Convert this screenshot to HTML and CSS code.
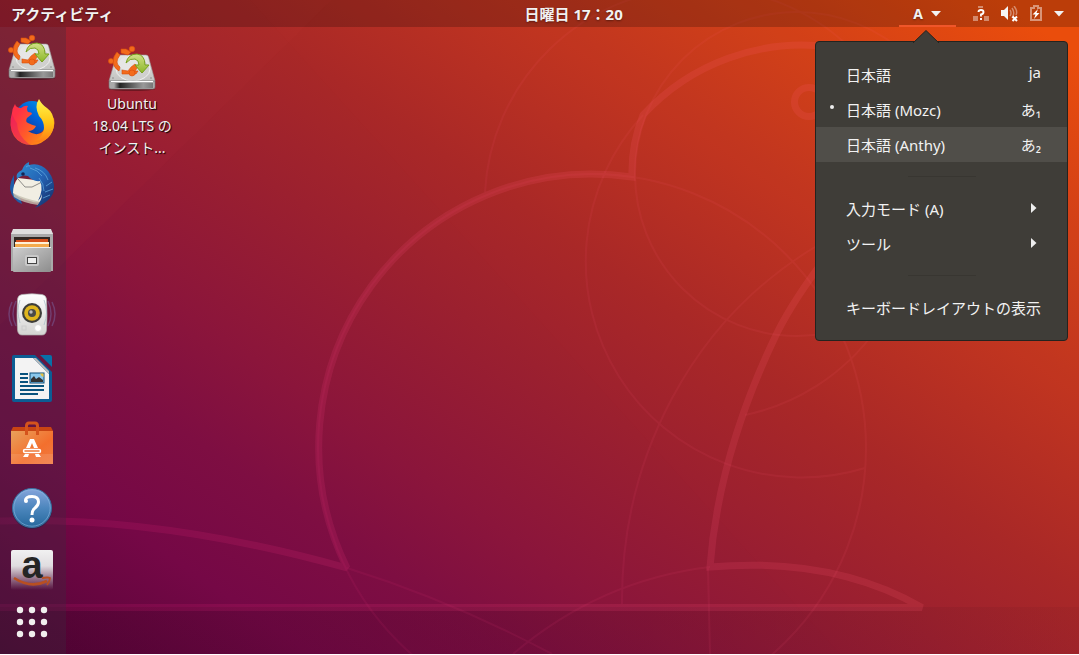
FILE: index.html
```html
<!DOCTYPE html>
<html lang="ja">
<head>
<meta charset="utf-8">
<title>Ubuntu デスクトップ</title>
<link rel="stylesheet" href="styles.css">
</head>
<body>
<svg width="0" height="0" class="defs" aria-hidden="true">
  <defs>
    <linearGradient id="disk" x1="0" y1="0" x2="0" y2="1"><stop offset="0" stop-color="#e6e6e4"/><stop offset="1" stop-color="#c2c2c0"/></linearGradient>
    <linearGradient id="diskFront" x1="0" y1="0" x2="1" y2="0"><stop offset="0" stop-color="#aaa"/><stop offset=".15" stop-color="#222"/><stop offset=".75" stop-color="#999"/><stop offset="1" stop-color="#777"/></linearGradient>
    <linearGradient id="green" x1="0" y1="0" x2="0" y2="1"><stop offset="0" stop-color="#d3e08a"/><stop offset="1" stop-color="#8cb829"/></linearGradient>
    <symbol id="installer" viewBox="0 0 48 48">
      <ellipse cx="24" cy="44" rx="23" ry="2" fill="#000" opacity=".3"/>
      <path d="M8 12Q8.500 10 11 10H38Q40 10 40.500 12L47 36H1Z" fill="url(#disk)" stroke="#999" stroke-width=".6"/>
      <ellipse cx="25" cy="24" rx="17" ry="12" fill="#d0d0ce" stroke="#f0f0f0"/>
      <ellipse cx="22" cy="19" rx="11" ry="8" fill="#e6e6e6"/>
      <path d="M1 36H47V42Q47 44 45 44H3Q1 44 1 42Z" fill="#aaa" stroke="#777" stroke-width=".6"/>
      <rect x="6" y="38" width="39" height="5" fill="url(#diskFront)"/>
      <path d="M3 36.500H45" stroke="#fff"/>
      <circle cx="5" cy="33" r=".8" fill="#888"/><circle cx="43" cy="33" r=".8" fill="#888"/>
      <g fill="#f36b1c" stroke="#d94e0c" stroke-width=".6">
        <path d="M13 4L18 4L23 7L20 10L13 8Z"/>
        <path d="M9 7L12 10Q9 14 9 17Q9 20 12 22L11 26Q6 23 5 18Q5 11 9 7Z"/>
        <path d="M14 25L20 26Q22 22 27 19L30 22L27 26H30L28 29H14Z"/>
        <circle cx="24" cy="4" r="2.800"/><circle cx="3" cy="16" r="2.600"/><circle cx="24" cy="28" r="3"/>
      </g>
      <path d="M18 18Q20 9 29 9Q37 10 37 20H41L34 28L27 20H31Q31 15 27 14Q22 13 18 18Z" fill="url(#green)" stroke="#77a11c" stroke-width="1"/>
    </symbol>
  </defs>
</svg>

<div class="screen">
  <svg class="wallpaper" viewBox="0 0 1079 654" preserveAspectRatio="xMidYMid slice" aria-hidden="true">
    <defs>
      <linearGradient id="wall" gradientUnits="userSpaceOnUse" x1="0" y1="654" x2="626" y2="-256">
        <stop offset="0" stop-color="#540337"/><stop offset=".16" stop-color="#750846"/><stop offset=".26" stop-color="#7e0e42"/>
        <stop offset=".35" stop-color="#8b153b"/><stop offset=".49" stop-color="#9b202f"/><stop offset=".6" stop-color="#a82827"/>
        <stop offset=".76" stop-color="#c2361f"/><stop offset=".88" stop-color="#d44217"/><stop offset="1" stop-color="#ea4e0c"/>
      </linearGradient>
      <linearGradient id="ground" x1="0" y1="0" x2="1" y2="0"><stop offset="0" stop-color="#180010" stop-opacity=".16"/><stop offset=".6" stop-color="#180010" stop-opacity=".12"/><stop offset="1" stop-color="#180010" stop-opacity=".04"/></linearGradient>
      <linearGradient id="outline" gradientUnits="userSpaceOnUse" x1="0" y1="600" x2="700" y2="200"><stop offset="0" stop-color="#d81478"/><stop offset=".6" stop-color="#f5447c"/><stop offset="1" stop-color="#ff5a70"/></linearGradient>
    </defs>
    <rect width="1079" height="654" fill="url(#wall)"/>
    <path d="M0 0H332L0 325Z" fill="#f04040" opacity=".04"/>
    <path d="M250 0L840 654H1079V0Z" fill="#ff5020" opacity=".015"/>
    <rect y="607" width="1079" height="47" fill="url(#ground)"/>
    <g fill="none" stroke="url(#outline)" stroke-width="2" opacity=".09">
      <circle cx="592" cy="448" r="274"/>
      <path d="M485 192A216 216 0 1 1 745 415"/>
      <path d="M643 115A216 216 0 0 0 865 468"/>
      <circle cx="797" cy="174" r="162"/>
      <path d="M622 604C621 460 690 320 820 244"/>
      <path d="M347 568Q450 600 552 654M710 567Q600 580 513 654M708 568L710 654"/>
    </g>
    <g fill="none" stroke="url(#outline)" stroke-width="7" stroke-miterlimit="2" opacity=".16">
      <path d="M0 521C120 517 240 538 347 568A273 273 0 0 1 632 177Q631 145 643 115A216 216 0 0 1 830 47"/>
      <path d="M0 607.500H922C860 572 790 560 710 567C715 500 735 420 777 333Q795 297 830 252"/>
      <circle cx="809" cy="102" r="14.500"/>
    </g>
  </svg>

  <header class="topbar">
    <button class="bar-button activities">アクティビティ</button>
    <button class="bar-button clock">日曜日 17：20</button>
    <div class="status">
      <button class="bar-button input-source" aria-expanded="true">A
        <svg width="10" height="6" aria-hidden="true"><path d="M0 0H10L5 5.500Z" fill="#f2f2f2"/></svg>
      </button>
      <button class="bar-button system" aria-label="システム">
        <svg width="16" height="16" viewBox="0 0 16 16" aria-hidden="true"><path d="M0 10H5V15H0ZM11 10H16V15H11ZM5 0H10V2H5Z" fill="#fff" opacity=".4"/><path d="M5.500 6Q5.500 4 8 4Q10.500 4 10.500 6Q10.500 8 8 8.500V10.500M8 12V14" fill="none" stroke="#fff" stroke-width="1.900"/></svg>
        <svg width="17" height="16" viewBox="0 0 17 16" aria-hidden="true"><path d="M0 4H3L7 0V14L3 10H0Z" fill="#f5f5f5"/><path d="M9 4Q11 7 9 10M11 2Q14.500 7 11 12M13 0Q17 5 15 9" fill="none" stroke="#fff" stroke-width="1.500" opacity=".4"/><path d="M11.500 10.500L16 15M16 10.500L11.500 15" stroke="#fff" stroke-width="2"/></svg>
        <svg width="12" height="17" viewBox="0 0 12 17" aria-hidden="true"><path d="M4 1H8V3H11V15H1V3H4Z" fill="none" stroke="#fff" stroke-width="2" opacity=".45"/><path d="M8 4L2.500 9.500H5.500L4 14L9.500 8H6.500Z" fill="#fff"/></svg>
        <svg width="10" height="6" aria-hidden="true"><path d="M0 0H10L5 5.500Z" fill="#f2f2f2"/></svg>
      </button>
    </div>
    <div class="popover">
      <svg class="pointer" width="26" height="13" viewBox="0 0 26 13" aria-hidden="true"><path d="M0 13L13 0.500L26 13" fill="#3f3d38" stroke="#24231f"/></svg>
      <ul class="menu">
        <li><button class="menu-item"><span>日本語</span><span class="short latin">ja</span></button></li>
        <li><button class="menu-item current"><span>日本語 (Mozc)</span><span class="short">あ₁</span></button></li>
        <li><button class="menu-item hover"><span>日本語 (Anthy)</span><span class="short">あ₂</span></button></li>
        <li class="separator"></li>
        <li><button class="menu-item"><span>入力モード (A)</span><svg class="caret" width="6" height="10" aria-hidden="true"><path d="M0 0L5.500 5L0 10Z" fill="#eee"/></svg></button></li>
        <li><button class="menu-item"><span>ツール</span><svg class="caret" width="6" height="10" aria-hidden="true"><path d="M0 0L5.500 5L0 10Z" fill="#eee"/></svg></button></li>
        <li class="separator"></li>
        <li><button class="menu-item"><span>キーボードレイアウトの表示</span></button></li>
      </ul>
    </div>
  </header>

  <main class="workspace">
    <nav class="dock" aria-label="ドック">
      <button class="launcher" aria-label="Ubuntu のインストール"><svg viewBox="0 0 48 48"><use href="#installer"/></svg></button>
      <button class="launcher" aria-label="Firefox">
        <svg viewBox="0 0 48 48">
          <defs><linearGradient id="ffBody" x1=".1" y1=".3" x2=".9" y2=".8"><stop offset="0" stop-color="#ff3047"/><stop offset=".45" stop-color="#ff5a2a"/><stop offset="1" stop-color="#ff980e"/></linearGradient>
          <linearGradient id="ffTail" x1="0" y1="0" x2="0" y2="1"><stop offset="0" stop-color="#fff44f"/><stop offset=".55" stop-color="#ffc414"/><stop offset="1" stop-color="#ff7a18"/></linearGradient>
          <linearGradient id="ffGlobe" x1="1" y1="0" x2=".2" y2="1"><stop offset="0" stop-color="#00a0ee"/><stop offset=".5" stop-color="#0060d8"/><stop offset="1" stop-color="#192c83"/></linearGradient></defs>
          <circle cx="24" cy="20" r="17" fill="url(#ffGlobe)"/>
          <path d="M7 6Q8 10 13 10Q17 7 20 8Q18 11 20 14Q24 14 24 16L19 20Q17 24 20 25Q24 27 28 28Q26 33 20 33Q27 38 33 35Q38 31 40 24L46 20Q48 30 41 38Q34 47 24 47Q12 47 6 38Q0 28 4 15Q4 11 7 6Z" fill="url(#ffBody)"/>
          <path d="M31 1Q34 7 39 10Q46 15 46 25Q46 34 40 40Q34 45 25 44Q36 39 36 30Q36 23 31 18Q26 8 31 1Z" fill="url(#ffTail)"/>
          <path d="M4 16Q0 29 8 40Q13 46 22 47Q9 37 9 25Q7 23 4 16Z" fill="#e01863" opacity=".45"/>
        </svg>
      </button>
      <button class="launcher" aria-label="Thunderbird">
        <svg viewBox="0 0 48 48">
          <defs><linearGradient id="tb" x1="0" y1="0" x2="1" y2="1"><stop offset="0" stop-color="#2f8fd0"/><stop offset=".5" stop-color="#2463b5"/><stop offset="1" stop-color="#14265c"/></linearGradient></defs>
          <path d="M6 13Q2 20 2 27Q4 38 14 42L12 35L6 32Z" fill="#1f5ca8"/>
          <path d="M10 16L36 19L34 39Q30 42 22 39Q10 36 5 31Q5 22 10 16Z" fill="#f1eee3"/>
          <path d="M10 17L17 25L24 25L36 19" fill="none" stroke="#8d8c88"/>
          <path d="M5 31Q17 37 33 40L30 43Q15 41 6 35Z" fill="#c7c2b1" opacity=".8"/>
          <path d="M9 17Q7 11 14 8Q16 2 21 0L21 3Q32 0 40 9Q47 18 46 28Q44 39 27 46Q34 39 34 32Q33 36 30 39Q36 27 32 19Q25 20 20 14Q14 12 9 17Z" fill="url(#tb)"/>
          <path d="M27 6Q37 9 40 18M31 16Q36 22 36 29M38 24L44 20M37 30L45 27M35 36L42 33M22 6Q30 8 34 14M18 5Q20 3 22 4" fill="none" stroke="#62a9df" stroke-width="1" opacity=".75"/>
          <circle cx="15" cy="12" r="1.800" fill="#152455"/>
        </svg>
      </button>
      <button class="launcher" aria-label="ファイル">
        <svg viewBox="0 0 48 48">
          <defs><linearGradient id="cab" x1="0" y1="0" x2="1" y2="1"><stop offset="0" stop-color="#cecece"/><stop offset="1" stop-color="#8d8d8d"/></linearGradient></defs>
          <path d="M3 8L6 3H42L45 8V45H3Z" fill="#aaa"/><path d="M5 3H43L45 8H3Z" fill="#dedede"/>
          <rect x="6" y="11" width="36" height="10" fill="#302824"/><path d="M8 14H20L22 13H40V21H8Z" fill="#d6501b"/><rect x="7" y="16" width="34" height="2" fill="#fff0d6"/><rect x="7" y="18" width="34" height="3" fill="#f4aa4c"/>
          <rect x="5" y="21" width="38" height="25" rx="1" fill="url(#cab)"/><path d="M5 21.500H43" stroke="#eee"/>
          <rect x="17" y="29" width="14" height="11" rx="2" fill="#c9c9c9"/><rect x="19.500" y="31.500" width="9" height="6" fill="#eee" stroke="#444"/>
        </svg>
      </button>
      <button class="launcher" aria-label="Rhythmbox">
        <svg viewBox="0 -2 48 48">
          <defs><linearGradient id="rb" x1="0" y1="0" x2="0" y2="1"><stop offset="0" stop-color="#fff"/><stop offset="1" stop-color="#d4d4d2"/></linearGradient></defs>
          <g fill="none" stroke="#8084c8" stroke-width="1.500" opacity=".35"><path d="M8 9Q2 22 8 34M4 10Q-2 22 4 34M40 9Q46 22 40 34M44 10Q50 22 44 34"/></g>
          <path d="M14 2.500Q24 1 34 2.500Q38 3 38.500 7Q39.500 24 38.500 38Q38 43 34 43H14Q10 43 9.500 38Q8.500 24 9.500 7Q10 3 14 2.500Z" fill="url(#rb)" stroke="#aaa" stroke-width=".7"/>
          <circle cx="24" cy="21" r="10" fill="#3e3e3a"/><circle cx="24" cy="21" r="7.800" fill="#dfb51c"/><circle cx="24" cy="21" r="4" fill="#4a4a48"/><circle cx="23" cy="20" r="1.700" fill="#bbb"/>
          <circle cx="30" cy="36" r="3.500" fill="#fff" stroke="#ddd"/><rect x="14" y="34" width="4" height="4" fill="none" stroke="#ccc"/>
          <path d="M12 8Q8 18 12 31M36 8Q41 20 36 33" fill="none" stroke="#a3bac5" opacity=".7"/>
        </svg>
      </button>
      <button class="launcher" aria-label="LibreOffice Writer">
        <svg viewBox="0 0 48 48">
          <path d="M6 1H27L44 18V46Q44 48 42 48H6Q4 48 4 46V3Q4 1 6 1Z" fill="#0c5d94"/><path d="M32 1H42Q44 1 44 3V13Z" fill="#0871a8"/>
          <path d="M7 4H25L41 20V45H7Z" fill="#f3f3f3"/><path d="M25 4L41 20V17L28 4Z" fill="#bbb"/>
          <path d="M12 20H20M12 24H20M12 28H20M12 32H36M12 36H36M12 40H30" stroke="#08527d" stroke-width="2"/>
          <rect x="22" y="19" width="14" height="10" fill="#8ac8ec" stroke="#0c4f7a"/><path d="M23 28V25L26 22L28 25L31 23L35 26V28Z" fill="#333"/><path d="M32 19.500H35.500V23Q33 22 32 19.500Z" fill="#e9c23c"/>
        </svg>
      </button>
      <button class="launcher" aria-label="Ubuntu ソフトウェア">
        <svg viewBox="0 -2 48 48">
          <defs><linearGradient id="bag" x1="0" y1="0" x2="1" y2="1"><stop offset="0" stop-color="#e9a15b"/><stop offset=".6" stop-color="#f36f2d"/><stop offset="1" stop-color="#f07c45"/></linearGradient></defs>
          <path d="M5 7H43L45 11H3Z" fill="#c94413"/><path d="M3 11H45V44H3Z" fill="url(#bag)"/><path d="M3 34H45V44H3Z" fill="#fff" opacity=".1"/>
          <path d="M18.500 15V6Q18.500 3 21 3H27Q29.500 3 29.500 6V15" fill="none" stroke="#d5531c" stroke-width="3"/>
          <path d="M22 19H26L30 28H26L24 23L22 28H18ZM17 34H21L20 37H15ZM27 34H31L33 37H28Z" fill="#fff"/>
          <rect x="15.500" y="29.500" width="17" height="3" rx="1.500" fill="#ed7737" stroke="#fff" stroke-width="1.500"/>
        </svg>
      </button>
      <button class="launcher" aria-label="ヘルプ">
        <svg viewBox="0 -2 48 48">
          <defs><linearGradient id="help" x1="0" y1="0" x2="0" y2="1"><stop offset="0" stop-color="#86a5dc"/><stop offset=".5" stop-color="#4c86bd"/><stop offset="1" stop-color="#25689c"/></linearGradient></defs>
          <circle cx="24" cy="25" r="20" fill="#172b50" opacity=".5"/><circle cx="24" cy="24" r="19.500" fill="url(#help)" stroke="#38719f"/><circle cx="24" cy="24" r="18.200" fill="none" stroke="#8bb8df" opacity=".6"/>
          <path d="M17.500 17Q17 12.500 24 12.500Q30.500 12.500 30.500 18Q30.500 21 27 24Q24 26 24 31" fill="none" stroke="#fff" stroke-width="3"/><circle cx="18" cy="17" r="2" fill="#fff"/><circle cx="24" cy="36" r="2.500" fill="#fff"/>
        </svg>
      </button>
      <button class="launcher" aria-label="Amazon">
        <svg viewBox="0 0 48 48">
          <defs><linearGradient id="amz" x1="0" y1="0" x2="0" y2="1"><stop offset="0" stop-color="#f1f1f1"/><stop offset=".4" stop-color="#e0dde0"/><stop offset="1" stop-color="#ddd" stop-opacity="0"/></linearGradient></defs>
          <rect x="3" y="4" width="42" height="40" rx="2" fill="url(#amz)"/>
          <text x="24" y="32" text-anchor="middle" class="amazon-letter">a</text>
          <path d="M6 32Q23 43 39 35" fill="none" stroke="#b84f21" stroke-width="2.600"/><path d="M34 32Q40 31 42 32Q42 35 39 39" fill="none" stroke="#b84f21" stroke-width="1.800"/>
        </svg>
      </button>
      <button class="launcher apps" aria-label="アプリケーションを表示する">
        <svg viewBox="0 0 48 48"><g fill="#f1efee"><circle cx="12" cy="12" r="3.200"/><circle cx="24" cy="12" r="3.200"/><circle cx="36" cy="12" r="3.200"/><circle cx="12" cy="24" r="3.200"/><circle cx="24" cy="24" r="3.200"/><circle cx="36" cy="24" r="3.200"/><circle cx="12" cy="36" r="3.200"/><circle cx="24" cy="36" r="3.200"/><circle cx="36" cy="36" r="3.200"/></g></svg>
      </button>
    </nav>
    <section class="desktop">
      <button class="desktop-icon">
        <svg viewBox="0 0 48 48" aria-hidden="true"><use href="#installer"/></svg>
        <span>Ubuntu<br>18.04 LTS の<br>インスト...</span>
      </button>
    </section>
  </main>
</div>
</body>
</html>
```
FILE: styles.css
```css
* { box-sizing: border-box; }

body {
  margin: 0;
  background: #fff;
  color: #f2f2f2;
  font-family: "Noto Sans", "Noto Sans CJK JP", sans-serif;
  font-size: 14px;
}

button {
  border: 0;
  padding: 0;
  background: none;
  color: inherit;
  font: inherit;
}

svg { display: block; flex: none; }
.defs { position: absolute; }

.screen {
  position: relative;
  display: flex;
  flex-direction: column;
  min-height: calc(100vh - 1px);
}

.wallpaper {
  position: absolute;
  inset: 0;
  width: 100%;
  height: 100%;
}

.topbar {
  position: relative;
  z-index: 2;
  display: grid;
  grid-template-columns: calc(50% - 15px) auto 1fr;
  grid-template-rows: 27px;
  background: rgba(0, 0, 0, 0.2);
}

.bar-button {
  display: flex;
  align-items: center;
  height: 27px;
  font-size: 14px;
  font-weight: 700;
  line-height: 20px;
  white-space: nowrap;
  text-shadow: 0 1px 2px rgba(0, 0, 0, 0.4);
}

.activities,
.clock { font-size: 15px; }

.activities { padding-left: 11px; }

.status {
  display: flex;
  justify-content: flex-end;
  gap: 17px;
  padding-right: 15px;
}

.input-source {
  gap: 8px;
  padding: 2px 15px 0 14px;
  border-bottom: 2px solid #f0562a;
}

.system { gap: 12px; }

.popover {
  position: absolute;
  top: 41px;
  right: 11px;
  width: 253px;
  padding: 15px 0;
  border: 1px solid #24231f;
  border-radius: 4px;
  background: #3f3d38;
}

.pointer {
  position: absolute;
  bottom: 100%;
  left: 97px;
  margin-bottom: -1px;
}

.menu {
  margin: 0;
  padding: 0;
  list-style: none;
  font-size: 15px;
}

.menu-item {
  position: relative;
  display: flex;
  align-items: center;
  justify-content: space-between;
  width: 100%;
  height: 35px;
  padding: 0 26px 0 30px;
  white-space: nowrap;
}

.menu-item.hover { background: #504e49; }

.menu-item.current::before {
  content: "";
  position: absolute;
  left: 14px;
  top: 13px;
  width: 4px;
  height: 4px;
  border-radius: 50%;
  background: #eee;
}

.short.latin { padding-bottom: 6px; }
.caret { margin: 0 4px 2px 0; }

.separator {
  height: 29px;
  padding-top: 14px;
}

.separator::before {
  content: "";
  display: block;
  width: 68px;
  height: 1px;
  margin: 0 auto;
  background: #383631;
}

.workspace {
  position: relative;
  display: flex;
  flex: 1;
}

.dock {
  display: flex;
  flex-direction: column;
  align-items: center;
  gap: 16px;
  width: 66px;
  padding: 7px 2px 0 0;
  background: rgba(58, 45, 62, 0.32);
}

.launcher { width: 48px; height: 48px; }
.launcher svg { overflow: visible; }
.launcher.apps { margin-top: -12px; }

.amazon-letter {
  font: 700 38px "Liberation Sans", sans-serif;
  fill: #252525;
}

.desktop { padding: 18px 0 0 26px; }

.desktop-icon {
  display: flex;
  flex-direction: column;
  align-items: center;
  width: 80px;
  line-height: 22px;
  white-space: nowrap;
  text-shadow: 1px 1px 1px #000;
}

.desktop-icon svg { width: 48px; height: 48px; }
```
